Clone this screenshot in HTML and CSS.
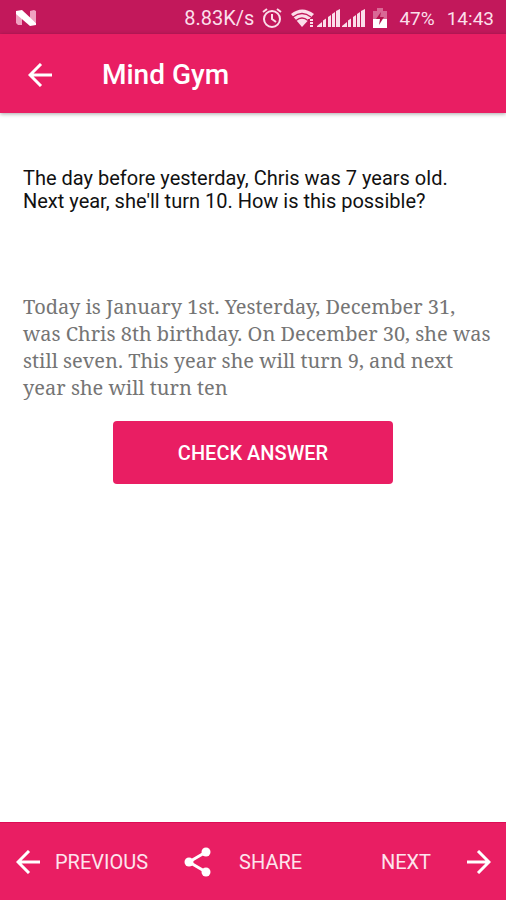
FILE: index.html
```html
<!DOCTYPE html>
<html lang="en">
<head>
<meta charset="utf-8">
<meta name="viewport" content="width=device-width, initial-scale=1">
<title>Mind Gym</title>
<link rel="stylesheet" href="styles.css">
</head>
<body>
<div class="status">
  <svg class="nougat" width="22" height="18" viewBox="0 0 22 18" aria-hidden="true">
    <path d="M1 2l6 4v10H3l-2-2zM15 2l4-1 2 1v12l-6-5z" fill="#f0a0c0"/>
    <path d="M1 2l6-1 14 13v2l-6 1L1 5z" fill="#fff"/>
  </svg>
  <span class="speed">8.83K/s</span>
  <svg class="alarm" width="20" height="20" viewBox="0 0 20 20" fill="none" stroke="#fbdfea" stroke-width="2" aria-hidden="true">
    <circle cx="10" cy="11" r="8"/><path d="M1 4l4-3M19 4l-4-3M10 6v5l4 3"/>
  </svg>
  <svg class="wifi" width="24" height="20" viewBox="0 0 24 20" aria-hidden="true">
    <path d="M0 6Q11-3 23 6L11 19z" fill="#fbdfea"/>
    <path d="M2 9Q11 2 20 9M5 12.500Q11 7.500 17 12.500" fill="none" stroke="#c2185b" stroke-width="1.300"/>
    <path d="M17 11h6v8h-6z" fill="#c2185b"/><path d="M19 11h3v2h-3zM19 14h3v2h-3zM19 17h3v2h-3z" fill="#fbdfea"/>
  </svg>
  <svg class="signal" width="23" height="20" viewBox="0 0 23 20" fill="#fbdfea" aria-hidden="true">
    <path d="M0 19v-1l5-4v5zM6 12.500l3-2V19H6zM11 9l3-2v12h-3zM15 6l3-2v15h-3zM19 3l4-2v18h-4z"/>
  </svg>
  <svg class="signal" width="23" height="20" viewBox="0 0 23 20" fill="#fbdfea" aria-hidden="true">
    <path d="M0 19v-1l5-4v5zM6 12.500l3-2V19H6zM11 9l3-2v12h-3zM15 6l3-2v15h-3zM19 3l4-2v18h-4z"/>
  </svg>
  <svg class="battery" width="14" height="20" viewBox="0 0 14 20" aria-hidden="true">
    <path d="M0 3h4V0h6v3h4v8H0z" fill="#d96895"/><path d="M0 11h14v9H0z" fill="#fff"/>
    <path d="M8 4l-5 7h4l-1 6 5-8H7z" fill="#b5124d"/>
  </svg>
  <span class="percent">47%</span>
  <span class="clock">14:43</span>
</div>
<header class="appbar">
  <button class="back" aria-label="Back">
    <svg width="24" height="24" viewBox="0 0 24 24" fill="none" stroke="#fff" stroke-width="3" aria-hidden="true"><path d="M24 12H3M13 1L2 12l11 11"/></svg>
  </button>
  <h1>Mind Gym</h1>
</header>
<main>
  <p class="question">The day before yesterday, Chris was 7 years old. Next year, she'll turn 10. How is this possible?</p>
  <p class="answer">Today is January 1st. Yesterday, December 31,<br>was Chris 8th birthday. On December 30, she was<br>still seven. This year she will turn 9, and next<br>year she will turn ten</p>
  <button class="check">CHECK ANSWER</button>
</main>
<footer class="actions">
  <button class="action">
    <svg width="24" height="24" viewBox="0 0 24 24" fill="none" stroke="#fff" stroke-width="3" aria-hidden="true"><path d="M24 12H3M13 1L2 12l11 11"/></svg>
    <span>PREVIOUS</span>
  </button>
  <button class="action share">
    <svg width="28" height="30" viewBox="0 0 28 30" aria-hidden="true"><path d="M22 5L5 15l17 10" fill="none" stroke="#fff" stroke-width="3"/><g fill="#fff"><circle cx="22" cy="5" r="4.500"/><circle cx="5" cy="15" r="4.500"/><circle cx="22" cy="25" r="4.500"/></g></svg>
    <span>SHARE</span>
  </button>
  <button class="action next">
    <span>NEXT</span>
    <svg width="24" height="24" viewBox="0 0 24 24" fill="none" stroke="#fff" stroke-width="3" aria-hidden="true"><path d="M0 12h21M11 1l11 11-11 11"/></svg>
  </button>
</footer>
</body>
</html>
```
FILE: styles.css
```css
* {
  box-sizing: border-box;
}

body {
  margin: 0;
  min-height: 100vh;
  display: flex;
  flex-direction: column;
  background: #fff;
  font-family: Roboto, sans-serif;
}

svg {
  display: block;
  flex: none;
}

button {
  border: 0;
  padding: 0;
  background: none;
  color: inherit;
  font-family: inherit;
}

.status {
  display: flex;
  align-items: center;
  height: 34px;
  padding: 2px 12px 0 15px;
  background: #c2185b;
  color: #fbdfea;
  font-size: 19px;
}

.nougat {
  margin-right: auto;
}

.speed {
  font-size: 20px;
}

.alarm {
  margin-left: 8px;
}

.wifi {
  margin-left: 9px;
}

.signal {
  margin-left: 2px;
}

.battery {
  margin-left: 8px;
}

.percent,
.clock {
  margin-left: 12px;
}

.appbar {
  display: flex;
  align-items: center;
  height: 79px;
  padding: 2px 28px 0;
  background: #e91e63;
  color: #fff;
  box-shadow: 0 1px 4px rgba(0, 0, 0, 0.35);
}

.back {
  margin-right: 50px;
}

h1 {
  margin: 0;
  font-size: 28px;
  font-weight: 500;
}

main {
  flex: 1;
  padding: 54px 23px 24px;
}

.question {
  margin: 0;
  min-height: 126px;
  font-size: 20px;
  line-height: 23px;
  color: #111;
}

.answer {
  margin: 0 -12px 0 0;
  font-family: "Noto Serif", "Droid Serif", "Liberation Serif", serif;
  font-size: 20px;
  line-height: 27px;
  color: #757575;
}

.check {
  display: block;
  width: 61%;
  height: 63px;
  margin: 20px auto 0;
  border-radius: 4px;
  background: #e91e63;
  color: #fff;
  font-size: 20px;
  font-weight: 500;
}

.actions {
  display: flex;
  align-items: center;
  height: 78px;
  padding: 0 15px 0 16px;
  background: #e91e63;
  border-top: 1px solid #dc0d55;
  color: #fde4ed;
}

.action {
  display: flex;
  align-items: center;
  gap: 15px;
  font-size: 20px;
}

.share {
  gap: 27px;
  margin-left: 36px;
}

.next {
  gap: 36px;
  margin-left: auto;
}
```
